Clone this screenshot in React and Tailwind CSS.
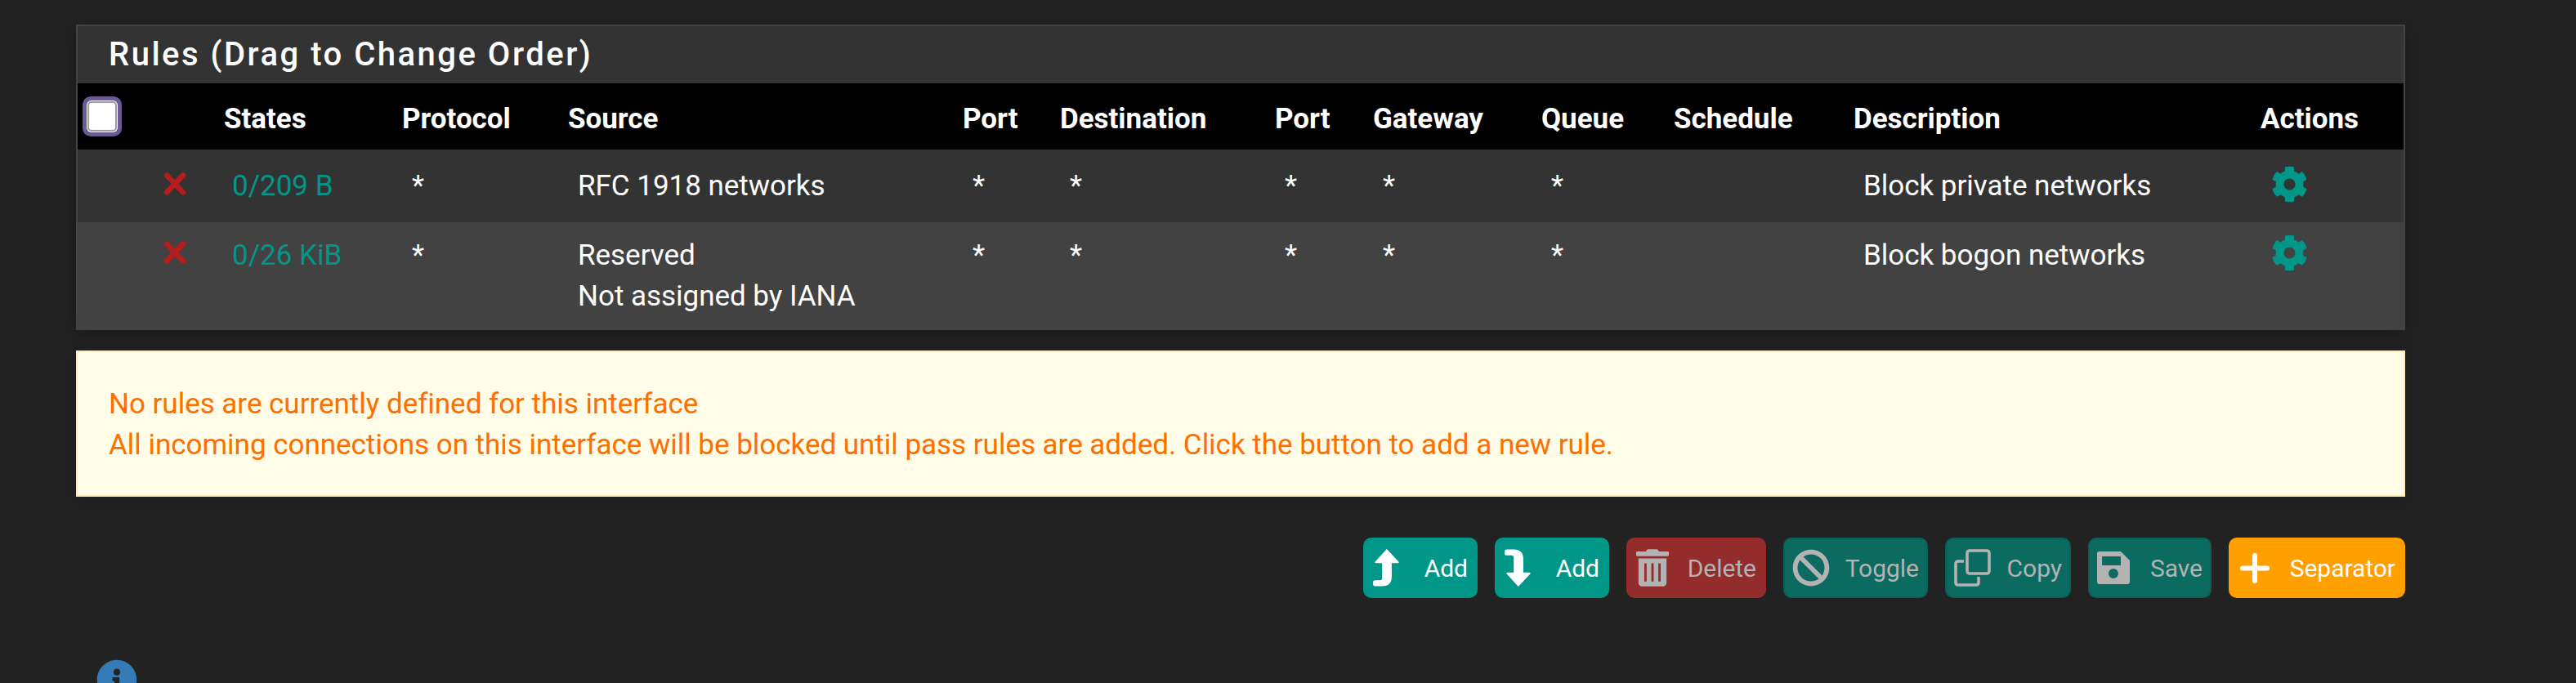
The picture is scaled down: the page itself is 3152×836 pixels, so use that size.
import { FaBan, FaCog, FaInfoCircle, FaTrashAlt } from 'react-icons/fa'

const COLUMNS = [90, 89, 218, 203, 483, 119, 263, 120, 206, 162, 220, 498, 175]

const rules = [
  {
    states: '0/209 B',
    source: ['RFC 1918 networks'],
    description: 'Block private networks',
    rowClass: 'h-[89px] bg-[#333333]',
    cellClass: 'pt-[20px]',
    iconClass: '-mt-[3px]',
  },
  {
    states: '0/26 KiB',
    source: ['Reserved', 'Not assigned by IANA'],
    description: 'Block bogon networks',
    rowClass: 'h-[132px] bg-[#424242]',
    cellClass: 'pt-[16px]',
    iconClass: '-mt-[4px]',
  },
]

const headers = ['States', 'Protocol', 'Source', 'Port', 'Destination', 'Port', 'Gateway', 'Queue', 'Schedule', 'Description', 'Actions']

function TimesIcon() {
  return (
    <svg viewBox="0 0 28 28" className="h-[28px] w-[28px]" fill="none" stroke="#b71c1c" strokeWidth="6.5" strokeLinecap="round">
      <path d="M4 3.5 L24 24.5 M24 3.5 L4 24.5" />
    </svg>
  )
}

function HookUpIcon({ flip = false }) {
  return (
    <svg viewBox="0 0 95 136" className={`h-[46px] w-[32px] ${flip ? '-scale-y-100' : ''}`} fill="currentColor">
      <path d="M50 0 L93 46 Q96 51 90 51 L68 51 V100 Q68 135 33 135 H8 Q0 135 0 127 V121 Q0 113 8 113 H25 Q33 113 33 105 V51 H11 Q5 51 8 46 Z" />
    </svg>
  )
}

function CopyIcon() {
  return (
    <svg viewBox="0 0 45 46" className="h-[46px] w-[45px]" fill="none" stroke="currentColor" strokeWidth="3.6" strokeLinejoin="round">
      <rect x="16" y="2" width="27" height="28" rx="3" />
      <path d="M12 15 H5 Q2 15 2 18 V41 Q2 44 5 44 H27 Q30 44 30 41 V34" />
    </svg>
  )
}

function SaveIcon() {
  return (
    <svg viewBox="0 0 40 40" className="h-[40px] w-[40px]">
      <path
        fill="currentColor"
        fillRule="evenodd"
        d="M3 0 H29 L40 11 V37 Q40 40 37 40 H3 Q0 40 0 37 V3 Q0 0 3 0 Z M7 6 Q6 6 6 7 V16 Q6 17 7 17 H28 Q29 17 29 16 V7 Q29 6 28 6 Z M20 21 A6 6 0 1 0 20 33 A6 6 0 1 0 20 21 Z"
      />
    </svg>
  )
}

function PlusIcon() {
  return (
    <svg viewBox="0 0 36 37" className="h-[37px] w-[36px]" fill="none" stroke="currentColor" strokeWidth="6" strokeLinecap="round">
      <path d="M18 3 V34 M3 18.5 H33" />
    </svg>
  )
}

const buttons = [
  { label: 'Add', width: 'w-[140px]', pad: 'pl-[12px] pr-[12px]', tone: 'bg-[#009688] text-white', icon: <HookUpIcon /> },
  { label: 'Add', width: 'w-[140px]', pad: 'pl-[12px] pr-[12px]', tone: 'bg-[#009688] text-white', icon: <HookUpIcon flip /> },
  { label: 'Delete', width: 'w-[171px]', pad: 'pl-[12px] pr-[12px]', tone: 'bg-[#952c2c] text-[#b3b3b3]', icon: <FaTrashAlt className="h-[46px] w-[40px]" /> },
  { label: 'Toggle', width: 'w-[177px]', pad: 'pl-[9px] pr-[9px]', tone: 'border-2 border-[#0d5f55] bg-[#0c6b60] text-[#b3b3b3]', icon: <FaBan className="h-[46px] w-[46px]" /> },
  { label: 'Copy', width: 'w-[154px]', pad: 'pl-[9px] pr-[9px]', tone: 'border-2 border-[#0d5f55] bg-[#0c6b60] text-[#b3b3b3]', icon: <CopyIcon /> },
  { label: 'Save', width: 'w-[151px]', pad: 'pl-[9px] pr-[9px]', tone: 'border-2 border-[#0d5f55] bg-[#0c6b60] text-[#b3b3b3]', icon: <SaveIcon /> },
  { label: 'Separator', width: 'w-[216px]', pad: 'pl-[14px] pr-[12px]', tone: 'bg-[#ff9f00] text-white', icon: <PlusIcon /> },
]

function Checkbox() {
  return (
    <div className="ml-[6px] h-[49px] w-[48px] rounded-[10px] bg-[#6b5b95] p-[5px]">
      <div className="h-full w-full rounded-[6px] bg-white p-[1px]">
        <div className="h-full w-full rounded-[5px] border-2 border-[#9a9aa8] bg-white" />
      </div>
    </div>
  )
}

export default function App() {
  return (
    <div className="h-[836px] overflow-hidden bg-[#222222] pt-[30px] font-['Roboto',sans-serif] text-[35px] leading-[50px] tracking-[-0.025px] text-white">
      <div className="ml-[93px] w-[2850px]">
        <div className="border-x-2 border-t-2 border-[#444444] bg-[#333333] shadow-[0_5px_18px_rgba(0,0,0,0.25)]">
          <h2 className="flex h-[70px] items-center pl-[38px] text-[40px] font-medium tracking-[2.5px]">Rules (Drag to Change Order)</h2>
          <table className="w-[2846px] table-fixed border-collapse">
            <colgroup>
              {COLUMNS.map((w, i) => (
                <col key={i} style={{ width: w }} />
              ))}
            </colgroup>
            <thead>
              <tr className="h-[81px] bg-black text-left font-bold">
                <th className="p-0 align-middle">
                  <Checkbox />
                </th>
                <th className="p-0" />
                {headers.map((h, i) => (
                  <th key={i} className="p-0 pt-[6px] font-bold">
                    {h}
                  </th>
                ))}
              </tr>
            </thead>
            <tbody>
              {rules.map((r) => (
                <tr key={r.states} className={r.rowClass}>
                  <td />
                  <td className={`align-top ${r.cellClass}`}>
                    <div className={`ml-[15px] flex h-[50px] items-center ${r.iconClass}`}>
                      <TimesIcon />
                    </div>
                  </td>
                  <td className={`pl-[10px] align-top text-[#009688] ${r.cellClass}`}>{r.states}</td>
                  <td className={`pl-[12px] align-top ${r.cellClass}`}>*</td>
                  <td className={`pl-[12px] align-top ${r.cellClass}`}>
                    {r.source.map((s) => (
                      <div key={s}>{s}</div>
                    ))}
                  </td>
                  <td className={`pl-[12px] align-top ${r.cellClass}`}>*</td>
                  <td className={`pl-[12px] align-top ${r.cellClass}`}>*</td>
                  <td className={`pl-[12px] align-top ${r.cellClass}`}>*</td>
                  <td className={`pl-[12px] align-top ${r.cellClass}`}>*</td>
                  <td className={`pl-[12px] align-top ${r.cellClass}`}>*</td>
                  <td />
                  <td className={`pl-[12px] align-top ${r.cellClass}`}>{r.description}</td>
                  <td className={`pl-[13px] align-top ${r.cellClass}`}>
                    <div className={`flex h-[50px] items-center ${r.iconClass}`}>
                      <FaCog className="h-[45px] w-[45px] text-[#009688]" />
                    </div>
                  </td>
                </tr>
              ))}
            </tbody>
          </table>
        </div>

        <div className="mt-[25px] border-2 border-[#ffecb3] bg-[#fffde7] pt-[39px] pr-[38px] pb-[36px] pl-[38px] text-[#ff6f00] shadow-[0_5px_18px_rgba(0,0,0,0.15)]">
          <div>No rules are currently defined for this interface</div>
          <div>All incoming connections on this interface will be blocked until pass rules are added. Click the button to add a new rule.</div>
        </div>

        <div className="mt-[50px] flex justify-end gap-[21px]">
          {buttons.map((b, i) => (
            <button
              key={i}
              type="button"
              className={`flex h-[74px] items-center justify-between rounded-[10px] text-[30px] leading-[45px] ${b.width} ${b.pad} ${b.tone}`}
            >
              {b.icon}
              <span>{b.label}</span>
            </button>
          ))}
        </div>

        <div className="mt-[75px] ml-[25px]">
          <FaInfoCircle className="h-[50px] w-[50px] text-[#337ab7]" />
        </div>
      </div>
    </div>
  )
}
